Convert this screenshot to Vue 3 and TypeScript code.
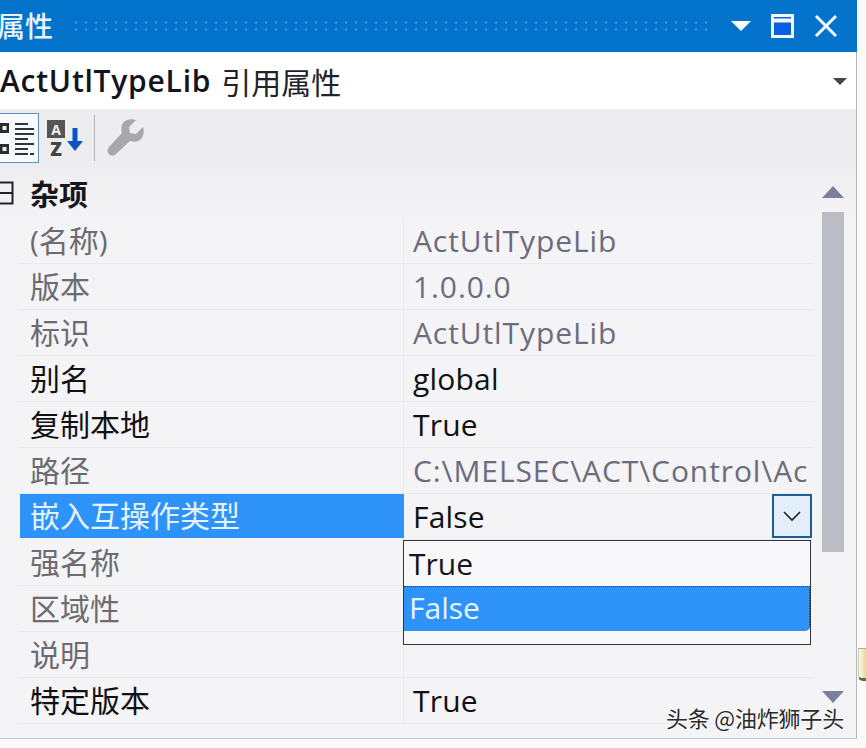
<script setup lang="ts">
interface PropRow {
  name: string
  value: string
  readonly: boolean
  selected?: boolean
}

const rows: PropRow[] = [
  { name: '(名称)', value: 'ActUtlTypeLib', readonly: true },
  { name: '版本', value: '1.0.0.0', readonly: true },
  { name: '标识', value: 'ActUtlTypeLib', readonly: true },
  { name: '别名', value: 'global', readonly: false },
  { name: '复制本地', value: 'True', readonly: false },
  { name: '路径', value: 'C:\\MELSEC\\ACT\\Control\\Ac', readonly: true },
  { name: '嵌入互操作类型', value: 'False', readonly: false, selected: true },
  { name: '强名称', value: '', readonly: true },
  { name: '区域性', value: '', readonly: true },
  { name: '说明', value: '', readonly: true },
  { name: '特定版本', value: 'True', readonly: false },
]
</script>

<template>
  <div class="screen">
    <div class="pane">
      <header class="titlebar">
        <span class="title">属性</span>
        <span class="grip"></span>
        <div class="win-buttons">
          <svg width="20" height="12" viewBox="0 0 20 12"><path d="M0 1h20L10 11z" fill="#fff" /></svg>
          <svg width="23" height="24" viewBox="0 0 23 24"><path d="M1.5 1.5h20v21h-20z" fill="#0a5fe0" stroke="#f4f8fc" stroke-width="3" /><path d="M1.5 6.5h20" stroke="#f4f8fc" stroke-width="4" /></svg>
          <svg width="24" height="22" viewBox="0 0 24 22"><path d="M2 1l20 20M22 1L2 21" fill="none" stroke="#f4f8fc" stroke-width="3" /></svg>
        </div>
      </header>

      <div class="objectbar">
        <span class="obj-name">ActUtlTypeLib</span>
        <span class="obj-type">引用属性</span>
        <svg class="obj-caret" width="14" height="8" viewBox="0 0 14 8"><path d="M0 1h14L7 8z" fill="#444" /></svg>
      </div>

      <div class="toolbar">
        <div class="tool tool-active">
          <svg width="38" height="50" viewBox="0 0 38 50">
            <rect x="0" y="10" width="9" height="10" fill="#2c2c2c" />
            <rect x="0" y="31" width="9" height="10" fill="#2c2c2c" />
            <rect x="2.5" y="13" width="4" height="4" fill="#eee" />
            <rect x="2.5" y="34" width="4" height="4" fill="#eee" />
            <path d="M15 11h13M15 16h19M15 21h19M15 26h13M15 31h19M15 36h13M15 41h13M30 41h4" stroke="#333" stroke-width="2" />
          </svg>
        </div>
        <div class="tool">
          <svg width="38" height="46" viewBox="0 0 38 46">
            <rect x="1" y="5" width="18" height="18" fill="#555" />
            <text x="10" y="20" text-anchor="middle" class="az-letter" fill="#eee">A</text>
            <text x="10" y="41" text-anchor="middle" class="az-letter-z" fill="#444">Z</text>
            <path d="M29 13v16" stroke="#0a55c4" stroke-width="5" />
            <path d="M21 26h16l-8 10z" fill="#0a55c4" />
          </svg>
        </div>
        <span class="tool-sep"></span>
        <svg class="wrench" width="38" height="38" viewBox="0 0 38 38">
          <path d="M36 8l-7 7-6-1-1-6 7-7c-6-2-12 0-14 5-1 3-1 6 0 8L2 28c-2 2-2 5 0 7s5 2 7 0l14-13c3 1 6 1 8 0 5-2 7-8 5-14z" fill="#a8a8ac" />
        </svg>
      </div>

      <div class="grid-wrap">
        <div class="grid">
          <div class="category">
            <svg class="expander" width="14" height="24" viewBox="0 0 14 24">
              <path d="M0 1.5h12.5v21H0M0 12h12.5" fill="none" stroke="#222" stroke-width="2" />
            </svg>
            <span class="cat-name">杂项</span>
          </div>
          <div v-for="row in rows" :key="row.name" class="row">
            <div class="name" :class="{ dim: row.readonly, selected: row.selected }">{{ row.name }}</div>
            <div class="value" :class="{ 'dim-value': row.readonly }">
              <span class="value-text">{{ row.value }}</span>
              <span v-if="row.selected" class="drop-btn">
                <svg width="18" height="11" viewBox="0 0 18 11"><path d="M1 1l8 8 8-8" fill="none" stroke="#222" stroke-width="1.6" /></svg>
              </span>
            </div>
          </div>

          <div class="dropdown">
            <div class="option">True</div>
            <div class="option option-active">False</div>
          </div>
        </div>

        <div class="scrollbar">
          <svg width="22" height="12" viewBox="0 0 22 12"><path d="M11 0l11 12H0z" fill="#7c7f9c" /></svg>
          <div class="thumb"></div>
          <svg class="arrow-down" width="22" height="12" viewBox="0 0 22 12"><path d="M0 0h22L11 12z" fill="#7c7f9c" /></svg>
        </div>
      </div>
    </div>

    <span class="edge-mark"></span>
    <span class="watermark">头条 @油炸狮子头</span>
  </div>
</template>

<style>
html, body {
  margin: 0;
  background: #fafafb;
}
</style>

<style scoped>
.screen {
  position: relative;
  width: 866px;
  height: 748px;
  overflow: hidden;
  background: #fafafb;
  font-family: "Open Sans", "Noto Sans CJK SC", sans-serif;
  color: #111;
}
.pane {
  width: 856px;
  height: 738px;
  display: flex;
  flex-direction: column;
  background: #f4f4f7;
  border-right: 1px solid #b4b6bc;
  border-bottom: 1px solid #c4c5ca;
}
.titlebar {
  height: 52px;
  flex: none;
  display: flex;
  align-items: center;
  background: #0373cc;
  color: #e8f4fc;
  margin-right: -1px;
}
.title {
  font-size: 28px;
  margin-left: -3px;
  line-height: 52px;
  font-weight: 500;
}
.grip {
  width: 640px;
  flex: none;
  height: 14px;
  margin-left: 18px;
  background-image: radial-gradient(circle, #4fa3e4 1px, transparent 1.2px);
  background-size: 10px 7px;
}
.win-buttons {
  display: flex;
  align-items: center;
  margin-left: auto;
  gap: 20px;
  padding-right: 19px;
}
.objectbar {
  height: 57px;
  flex: none;
  display: flex;
  align-items: center;
  background: #fff;
}
.obj-name {
  font-size: 30px;
  font-weight: 600;
  letter-spacing: 0.75px;
  color: #14141c;
}
.obj-type {
  font-size: 30px;
  margin-left: 10px;
  color: #22222a;
}
.obj-caret {
  margin-left: auto;
  margin-right: 9px;
}
.toolbar {
  height: 58px;
  flex: none;
  display: flex;
  align-items: center;
  background: #ededf0;
}
.tool {
  display: flex;
  align-items: center;
}
.tool-active {
  width: 39px;
  height: 50px;
  background: #f6f9fd;
  border: 1.5px solid #5a8fc0;
  border-left: none;
  box-sizing: border-box;
  overflow: hidden;
  margin-right: 7px;
}
.az-letter {
  font: 700 14px "Open Sans", sans-serif;
}
.az-letter-z {
  font: 800 19px "Open Sans", sans-serif;
}
.tool-sep {
  width: 1px;
  height: 46px;
  background: #b5b5bb;
  margin: 0 12px 0 10px;
}
.grid-wrap {
  flex: 1;
  display: flex;
  background: linear-gradient(#eeeef1, #f4f4f7 50px);
  min-height: 0;
}
.grid {
  position: relative;
  width: 812px;
  flex: none;
}
.category {
  height: 51px;
  display: flex;
  align-items: center;
  font-size: 29px;
}
.expander {
  flex: none;
}
.cat-name {
  margin-left: 16px;
  font-weight: 700;
  color: #16161c;
}
.row {
  height: 46px;
  margin-left: 20px;
  display: grid;
  grid-template-columns: 384px 408px;
}
.name,
.value {
  font-size: 30px;
  line-height: 46px;
  height: 45px;
  border-bottom: 1px solid #eaeaee;
  white-space: nowrap;
  overflow: hidden;
}
.name {
  padding-left: 10px;
  border-right: 1px solid #ececf0;
  width: 373px;
}
.name.dim {
  color: #6b6b70;
}
.name.selected {
  background: #2e93f8;
  color: #e6f3ff;
  height: 44px;
  line-height: 44px;
  border-bottom: none;
  border-right-color: #2e93f8;
}
.value {
  position: relative;
  padding-left: 9px;
  width: 399px;
}
.value-text {
  letter-spacing: 0.2px;
}
.dim-value {
  color: #6c6c7c;
}
.dim-value .value-text {
  letter-spacing: 0.9px;
}
.drop-btn {
  position: absolute;
  right: 0;
  top: 0;
  width: 40px;
  height: 44px;
  display: flex;
  align-items: center;
  justify-content: center;
  background: #e2effb;
  border: 2px solid #1d5c94;
  box-sizing: border-box;
}
.dropdown {
  position: absolute;
  left: 403px;
  top: 373px;
  width: 408px;
  height: 105px;
  background: #f8f8fa;
  border: 1.5px solid #33333a;
  box-sizing: border-box;
  z-index: 2;
}
.option {
  height: 45px;
  padding-left: 5px;
  font-size: 30px;
  line-height: 46px;
  color: #15151c;
}
.option-active {
  background: #2e93f8;
  color: #e6f3ff;
  border-top: 1.5px dotted #30305a;
  border-right: 1.5px dotted #30305a;
  border-bottom-right-radius: 5px;
  box-sizing: border-box;
  line-height: 42px;
}
.scrollbar {
  width: 22px;
  margin-left: 10px;
  display: flex;
  flex-direction: column;
  padding-top: 19px;
  box-sizing: border-box;
  height: 536px;
}
.thumb {
  width: 22px;
  height: 340px;
  margin-top: 14px;
  background: #bcbdc4;
  flex: none;
}
.arrow-down {
  margin-top: auto;
}
.edge-mark {
  position: absolute;
  left: 858px;
  top: 648px;
  width: 8px;
  height: 33px;
  border-top: 1px solid #a8a8a8;
  border-bottom: 3px solid #5c6b3a;
  border-left: 1px solid #c8c8b8;
  border-bottom-left-radius: 5px;
  background: linear-gradient(to right, #fbf9ee, #e8d98a);
  box-sizing: border-box;
}
.watermark {
  position: absolute;
  left: 666px;
  top: 703px;
  font-size: 22px;
  line-height: 28px;
  letter-spacing: -0.2px;
  color: #2a2a2a;
  text-shadow: 0 0 2px #fff, 0 0 2px #fff;
  font-family: "Noto Sans CJK SC", sans-serif;
}
</style>
